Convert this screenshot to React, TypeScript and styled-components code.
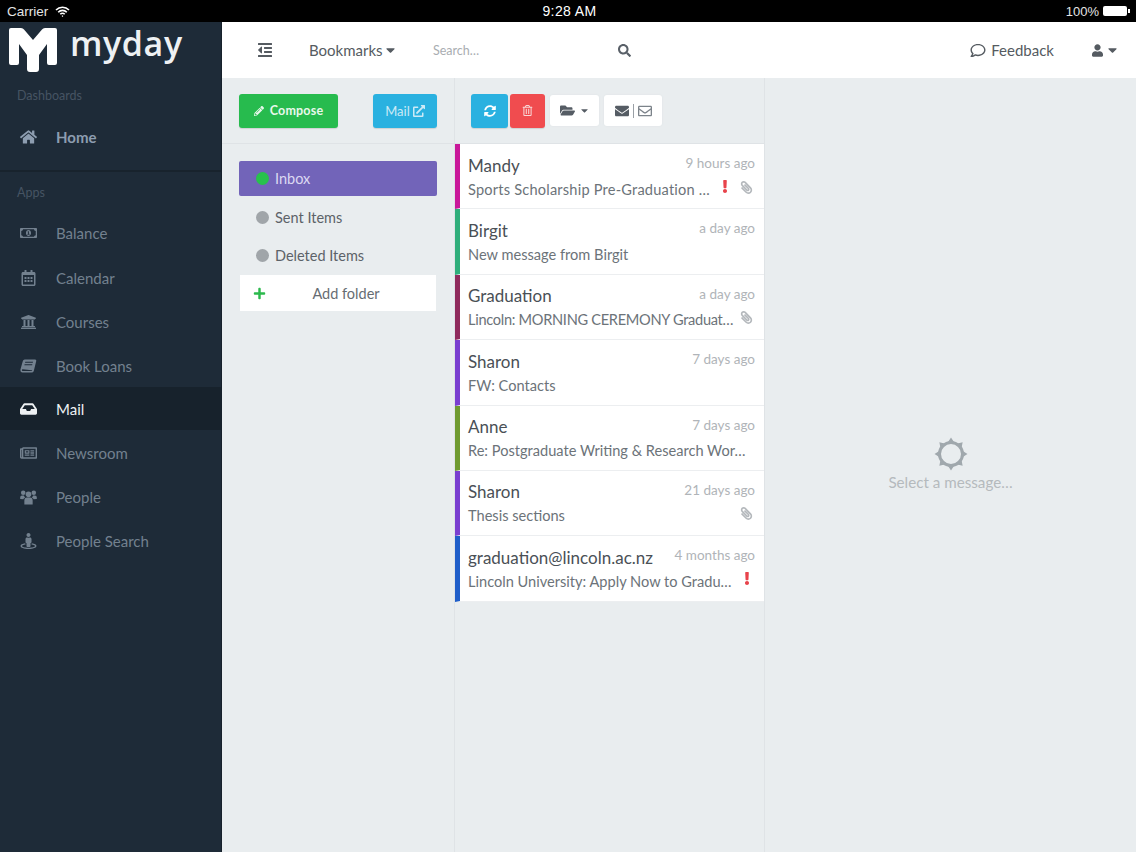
import React from "react";
import styled, { createGlobalStyle } from "styled-components";
import {
  FaHome, FaRegMoneyBillAlt, FaRegCalendarAlt, FaUniversity, FaInbox, FaRegNewspaper, FaStreetView,
  FaOutdent, FaSearch, FaRegComment, FaUser, FaCaretDown, FaPencilAlt, FaExternalLinkAlt, FaSyncAlt, FaRegTrashAlt,
  FaFolderOpen, FaEnvelope, FaRegEnvelope, FaPaperclip, FaExclamation, FaPlus,
} from "react-icons/fa";

const Global = createGlobalStyle`
  html, body { margin: 0; padding: 0; background: #e9edef; }
  * { box-sizing: border-box; }
  body { font-family: "Lato", "Noto Sans", sans-serif; color: #4c5258; }
`;

const Page = styled.div`width: 1136px; height: 852px; display: flex; flex-direction: column; overflow: hidden;`;
const StatusBar = styled.div`
  height: 22px; background: #000; color: #e4e4e4; display: grid; grid-template-columns: 1fr auto 1fr;
  align-items: center; padding: 0 7px; font: 13.5px "Liberation Sans", sans-serif; flex: none;
`;
const StatusLeft = styled.div`display: flex; align-items: center; gap: 7px;`;
const StatusTime = styled.div`font-size: 14px; letter-spacing: .4px; color: #fff; margin-left: 3px;`;
const StatusRight = styled.div`display: flex; justify-content: flex-end; align-items: center; gap: 4px; font-size: 13px;`;
const Battery = styled.span`width: 24px; height: 10px; background: #fff; border-radius: 2px; margin-right: 2px; position: relative;
  &::after { content: ""; position: absolute; right: -2.5px; top: 3px; width: 1.5px; height: 4px; background: #fff; }
`;
const Body = styled.div`flex: 1; display: flex; min-height: 0;`;
const Sidebar = styled.aside`width: 222px; flex: none; background: #1e2b38; border-right: 1px solid #17212b; display: flex; flex-direction: column;`;
const LogoRow = styled.div`height: 52px; display: flex; align-items: flex-start; padding: 5px 0 0 9px; gap: 13px;`;
const LogoText = styled.span`font: 600 34px/38px "Open Sans", sans-serif; color: #eef1f3; letter-spacing: .6px; margin-top: -3px;`;
const SectionLabel = styled.div<{ $top: number; $bottom: number }>`font-size: 12.5px; color: #465463; padding-left: 17px; height: 18px; line-height: 18px; margin-top: ${(p) => p.$top}px; margin-bottom: ${(p) => p.$bottom}px;`;
const Divider = styled.div`height: 2px; background: #18232d;`;
const NavItem = styled.div<{ $h: number; $active?: boolean; $bold?: boolean }>`
  height: ${(p) => p.$h}px; display: flex; align-items: center; padding-left: 20px; padding-bottom: ${(p) => (p.$bold ? 2 : 0)}px; flex: none;
  background: ${(p) => (p.$active ? "#17222c" : "transparent")};
  color: ${(p) => (p.$active ? "#eef1f3" : p.$bold ? "#8d9db0" : "#73818f")};
  font-size: 15px; font-weight: ${(p) => (p.$bold ? 700 : 400)};
`;
const NavIcon = styled.span`width: 36px; display: flex; align-items: center; svg { width: 17px; height: 16px; }`;
const Main = styled.div`flex: 1; display: flex; flex-direction: column; min-width: 0;`;
const Header = styled.header`height: 56px; background: #fff; display: flex; align-items: center; flex: none; padding-left: 35px; color: #555b61;`;
const Bookmarks = styled.div`display: flex; align-items: center; font-size: 15px; margin-left: 36px; width: 124px; svg { width: 11px; height: 14px; margin-left: 2px; }`;
const SearchBox = styled.div`width: 198px; display: flex; align-items: center; justify-content: space-between; font-size: 12.5px; color: #a9adb1; svg { width: 13px; height: 13px; color: #596068; }`;
const Feedback = styled.div`margin-left: auto; display: flex; align-items: center; gap: 5px; font-size: 15px; svg { width: 16px; height: 15px; }`;
const UserMenu = styled.div`margin: 0 18px 0 38px; display: flex; align-items: center; gap: 4px; svg:first-child { width: 11px; height: 13px; } svg:last-child { width: 11px; height: 14px; }`;
const Content = styled.div`flex: 1; display: flex; min-height: 0;`;
const FolderCol = styled.section`width: 233px; flex: none; border-right: 1px solid #dfe3e6; display: flex; flex-direction: column;`;
const ToolRow = styled.div`height: 66px; flex: none; border-bottom: 1px solid #dfe3e6; display: flex; align-items: center;`;
const LeftTools = styled(ToolRow)`justify-content: space-between; padding: 0 17px 0 17px;`;
const Btn = styled.div<{ $bg: string; $w: number; $white?: boolean }>`
  width: ${(p) => p.$w}px; height: ${(p) => (p.$white ? 31 : 34)}px; background: ${(p) => p.$bg}; border-radius: 3px; color: ${(p) => (p.$white ? "#555c64" : "#fff")};
  display: flex; align-items: center; justify-content: center; gap: 4px; font-size: 12.5px; flex: none;
  box-shadow: ${(p) => (p.$white ? "0 0 2px #dde1e4" : "0 1px 1px rgba(0,0,0,.12)")};
  svg { flex: none; }
`;
const Compose = styled(Btn)`font-weight: 700; gap: 6px; letter-spacing: .2px; color: #e9f8ec;`;
const MailLink = styled(Btn)`color: #cdeaf6; font-size: 13px; gap: 3px;`;
const Folders = styled.div`padding: 17px 17px 0 17px; display: flex; flex-direction: column;`;
const Folder = styled.div<{ $active?: boolean }>`
  height: ${(p) => (p.$active ? 35 : 38)}px; display: flex; align-items: center; gap: 6px; padding-left: 17px; font-size: 14.5px;
  border-radius: 2px; background: ${(p) => (p.$active ? "#7264b9" : "transparent")}; color: ${(p) => (p.$active ? "#dcd9f2" : "#5c6268")};
  margin-bottom: ${(p) => (p.$active ? 2 : 0)}px;
`;
const Dot = styled.span<{ $c: string }>`width: 13px; height: 13px; border-radius: 50%; background: ${(p) => p.$c};`;
const AddFolder = styled.div`height: 36px; margin: 1px 1px 0; background: #fff; display: flex; align-items: center; padding-left: 13px; font-size: 14.5px; color: #666c72; svg { width: 13px; height: 13px; color: #2bb94c; } span { flex: 1; text-align: center; padding-right: 10px; }`;
const ListCol = styled.section`width: 310px; flex: none; border-right: 1px solid #dfe3e6; display: flex; flex-direction: column;`;
const ListTools = styled(ToolRow)`padding-left: 16px; gap: 2px;`;
const Gap = styled.span`width: 1px; flex: none;`;
const Row = styled.div<{ $c: string }>`
  height: 65.4px; background: #fff; border-left: 5px solid ${(p) => p.$c}; border-bottom: 1px solid #eceef0; padding: 8.5px 9px 0 8px; flex: none;
`;
const RowTop = styled.div`display: flex; justify-content: space-between; align-items: flex-start; height: 25.5px;`;
const Name = styled.span`font-size: 17px; line-height: 25px; color: #4a5056;`;
const Time = styled.span`font-size: 13.5px; line-height: 20px; margin-top: .5px; color: #b0b4b8;`;
const RowBottom = styled.div`display: flex; align-items: center; height: 22px;`;
const Subject = styled.span<{ $ls?: number }>`font-size: 14.6px; color: #6c7379; white-space: nowrap; flex: 1; min-width: 0; letter-spacing: ${(p) => p.$ls ?? 0}px;`;
const Flag = styled.span`width: 16px; flex: none; display: flex; justify-content: center; margin-top: -5px; margin-left: 8px; color: #e8434b; svg { width: 10px; height: 13px; }`;
const Clip = styled.span`width: 16px; flex: none; display: flex; justify-content: center; margin-top: -4px; margin-left: 5px; margin-right: 1px; color: #b4b8bc; svg { width: 13px; height: 13px; transform: scaleX(-1); }`;
const Detail = styled.section`flex: 1; display: flex; flex-direction: column; align-items: center; justify-content: center; color: #b5babd; font-size: 15.2px; padding-bottom: 2px;`;
const Spin = styled.svg`width: 34px; height: 34px; margin-bottom: 2px;`;
const EnvGroup = styled.span`display: flex; align-items: center; gap: 4px; i { width: 1px; height: 14px; background: #9aa0a6; } svg:last-child { color: #7c838a; }`;

const BookIcon = () => (
  <svg viewBox="0 0 18 16" fill="currentColor">
    <path d="M5 1h11q1.6 0 1.2 1.6l-2.6 10.6q-.5 1.8-2.4 1.8H2.6Q.4 15 .4 12.6q0-.6.2-1.3L3 2.7Q3.4 1 5 1zm.6 2.6-.3 1h8.2l.3-1zm-.7 2.6-.3 1h8.2l.3-1zM2.8 11.4q-.7 0-.8.9t.8 1.1h9.3q.5 0 .7-.6l.1-.4q-.2.1-.6.1z" fillRule="evenodd" />
  </svg>
);

const PeopleIcon = () => (
  <svg viewBox="0 0 18 16" fill="currentColor">
    <circle cx="9" cy="5.2" r="3" />
    <circle cx="3.4" cy="3.4" r="2.4" />
    <circle cx="14.6" cy="3.4" r="2.4" />
    <path d="M4.6 16v-4q0-3.4 2.6-3.4h3.6q2.6 0 2.6 3.4v4z" />
    <path d="M.2 10V8.2q0-1.8 2-1.8h2q.4 1.4 1.3 2.1-1.5.6-2 1.9zM17.8 10V8.2q0-1.8-2-1.8h-2q-.4 1.4-1.3 2.1 1.5.6 2 1.9z" />
  </svg>
);

const nav = [
  [FaRegMoneyBillAlt, "Balance", 44], [FaRegCalendarAlt, "Calendar", 45], [FaUniversity, "Courses", 44], [BookIcon, "Book Loans", 43],
  [FaInbox, "Mail", 43], [FaRegNewspaper, "Newsroom", 45], [PeopleIcon, "People", 44], [FaStreetView, "People Search", 44],
] as const;

const msgs = [
  { c: "#c9189a", n: "Mandy", t: "9 hours ago", s: "Sports Scholarship Pre-Graduation …", f: 1, a: 1, ls: 0.2 },
  { c: "#2fae7b", n: "Birgit", t: "a day ago", s: "New message from Birgit" },
  { c: "#8f2a5c", n: "Graduation", t: "a day ago", s: "Lincoln: MORNING CEREMONY Graduat…", a: 1, ls: -0.3 },
  { c: "#7a3fd0", n: "Sharon", t: "7 days ago", s: "FW: Contacts" },
  { c: "#6f9a30", n: "Anne", t: "7 days ago", s: "Re: Postgraduate Writing & Research Wor…" },
  { c: "#7a3fd0", n: "Sharon", t: "21 days ago", s: "Thesis sections", a: 1 },
  { c: "#1f5ec9", n: "graduation@lincoln.ac.nz", t: "4 months ago", s: "Lincoln University: Apply Now to Gradu…", f: 1 },
];

const sunPoints = Array.from({ length: 8 }, (_, i) => {
  const a = (i / 8) * Math.PI * 2 - Math.PI / 2;
  const p = (r: number, d: number) => `${17 + r * Math.cos(a + d)},${17 + r * Math.sin(a + d)}`;
  return `M${p(11, -0.38)}L${p(16.5, 0)}L${p(11, 0.38)}Z`;
}).join("");

export default function App() {
  return (
    <Page>
      <Global />
      <StatusBar>
        <StatusLeft>
          Carrier
          <svg width="15" height="11" viewBox="0 0 15 11" fill="none" stroke="#fff" strokeWidth="1.6">
            <path d="M1 4a9 9 0 0 1 13 0M3.2 6.2a6 6 0 0 1 8.6 0M5.3 8.2a3 3 0 0 1 4.4 0" />
            <path d="M7.5 9.2l.9.9-.9.9-.9-.9z" fill="#fff" stroke="none" />
          </svg>
        </StatusLeft>
        <StatusTime>9:28 AM</StatusTime>
        <StatusRight>100%<Battery /></StatusRight>
      </StatusBar>
      <Body>
        <Sidebar>
          <LogoRow>
            <svg width="48" height="45" viewBox="0 0 48 45">
              <path fill="#fff" d="M2 1H12q2 0 3 1.500L24 13l9-10.500q1-1.500 3-1.500H46q2 0 2 2V36q0 2-2 2H40q-2 0-2-2V17L30 28V42q0 3-3 3H21q-3 0-3-3V28L10 17V36q0 2-2 2H2q-2 0-2-2V3q0-2 2-2z" />
            </svg>
            <LogoText>myday</LogoText>
          </LogoRow>
          <SectionLabel $top={13} $bottom={0}>Dashboards</SectionLabel>
          <NavItem $h={65} $bold><NavIcon><FaHome /></NavIcon>Home</NavItem>
          <Divider />
          <SectionLabel $top={12} $bottom={9}>Apps</SectionLabel>
          {nav.map(([I, label, h]) => (
            <NavItem key={label} $h={h} $active={label === "Mail"}><NavIcon><I /></NavIcon>{label}</NavItem>
          ))}
        </Sidebar>
        <Main>
          <Header>
            <FaOutdent size={16} />
            <Bookmarks>Bookmarks<FaCaretDown /></Bookmarks>
            <SearchBox>Search…<FaSearch /></SearchBox>
            <Feedback><FaRegComment />Feedback</Feedback>
            <UserMenu><FaUser /><FaCaretDown /></UserMenu>
          </Header>
          <Content>
            <FolderCol>
              <LeftTools>
                <Compose $bg="#27bb4e" $w={99}><FaPencilAlt size={10} />Compose</Compose>
                <MailLink $bg="#2ab1e0" $w={64}>Mail<FaExternalLinkAlt size={12} /></MailLink>
              </LeftTools>
              <Folders>
                <Folder $active><Dot $c="#27c24c" />Inbox</Folder>
                <Folder><Dot $c="#a0a5a9" />Sent Items</Folder>
                <Folder><Dot $c="#a0a5a9" />Deleted Items</Folder>
                <AddFolder><FaPlus /><span>Add folder</span></AddFolder>
              </Folders>
            </FolderCol>
            <ListCol>
              <ListTools>
                <Btn $bg="#2ab1e0" $w={37}><FaSyncAlt size={12} /></Btn>
                <Btn $bg="#f04c4f" $w={35}><FaRegTrashAlt size={11} color="#f8d8d8" /></Btn>
                <Gap />
                <Btn $bg="#fff" $w={49} $white><FaFolderOpen size={15} /><FaCaretDown size={11} /></Btn>
                <Gap />
                <Btn $bg="#fff" $w={58} $white><EnvGroup><FaEnvelope size={14} /><i /><FaRegEnvelope size={14} /></EnvGroup></Btn>
              </ListTools>
              {msgs.map((m, i) => (
                <Row key={i} $c={m.c}>
                  <RowTop><Name>{m.n}</Name><Time>{m.t}</Time></RowTop>
                  <RowBottom>
                    <Subject $ls={m.ls}>{m.s}</Subject>
                    {m.f ? <Flag><FaExclamation /></Flag> : null}
                    {m.a ? <Clip><FaPaperclip /></Clip> : null}
                  </RowBottom>
                </Row>
              ))}
            </ListCol>
            <Detail>
              <Spin viewBox="0 0 34 34">
                <circle cx="17" cy="17" r="11.5" fill="none" stroke="#a0a8ad" strokeWidth="3" />
                <path d={sunPoints} fill="#a0a8ad" />
              </Spin>
              Select a message…
            </Detail>
          </Content>
        </Main>
      </Body>
    </Page>
  );
}
